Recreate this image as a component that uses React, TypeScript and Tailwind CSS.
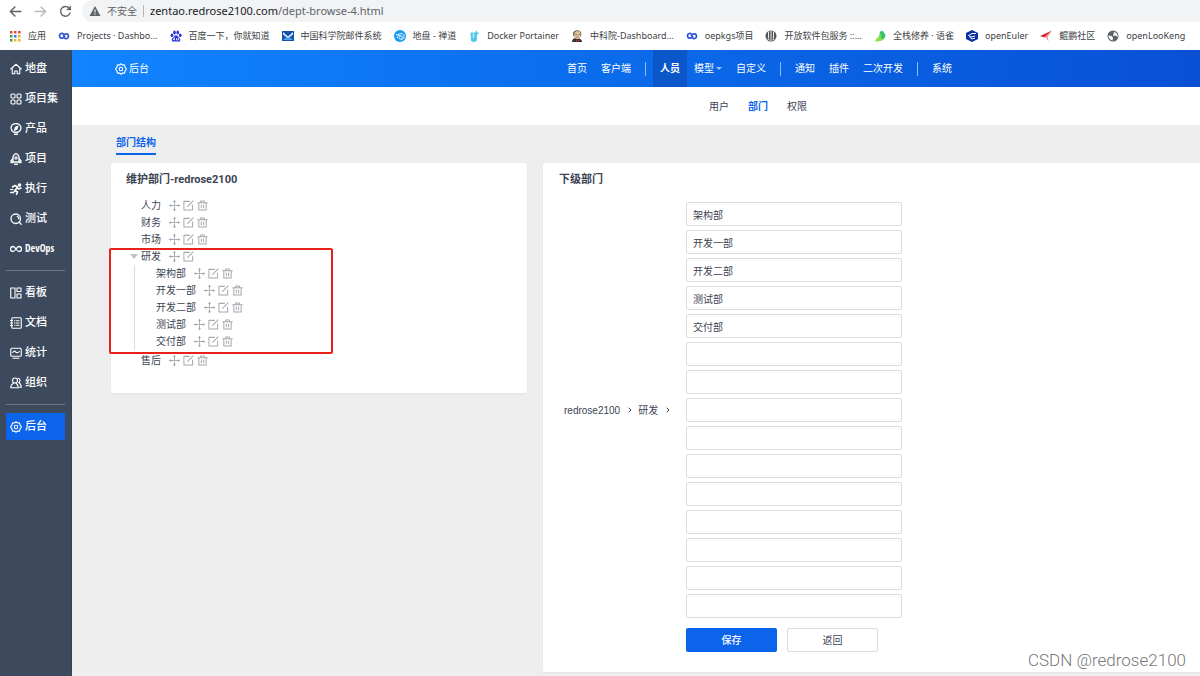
import { useState, type ReactNode } from "react";
import { ChevronRight } from "lucide-react";

interface IconProps {
    children: ReactNode;
    className?: string;
}

interface NavItem {
    label: string;
    icon: ReactNode;
    narrow?: boolean;
}

interface DeptNode {
    name: string;
    children?: DeptNode[];
}

const LineIcon = ({ children, className = "size-3" }: IconProps) => (
    <svg
        viewBox="0 0 24 24"
        fill="none"
        stroke="currentColor"
        strokeWidth="2.2"
        strokeLinecap="round"
        strokeLinejoin="round"
        aria-hidden="true"
        className={`shrink-0 ${className}`}
    >
        {children}
    </svg>
);

const FillIcon = ({ children }: IconProps) => (
    <svg viewBox="0 0 24 24" aria-hidden="true" className="size-3 shrink-0">
        {children}
    </svg>
);

const GearIcon = () => (
    <LineIcon>
        <path d="M12 1.500 15 4l4-.2.9 4L23 12l-3.100 4.200-.9 4-4-.2-3 2.500-3-2.500-4 .2-.9-4L1 12l3.100-4.200.9-4L9 4z" />
        <circle cx="12" cy="12" r="3.500" />
    </LineIcon>
);

const LoopIcon = () => (
    <FillIcon>
        <g fill="none" stroke="#3355d6" strokeWidth="3.600">
            <path d="M11 8.500C9 5.500 3 6.500 3 11.500s5 6 8 3.500l3-3" />
            <path d="M13 15.500c2 3 8 2 8-3s-5-6-8-3.500l-3 3" />
        </g>
    </FillIcon>
);

const bookmarks: NavItem[] = [
    {
        label: "应用",
        icon: (
            <FillIcon>
                <path fill="#e2483d" d="M2 2h5v5H2zM10 2h5v5h-5zM18 2h5v5h-5z" />
                <path fill="#3f9a54" d="M2 10h5v5H2z" />
                <path fill="#3c7be0" d="M10 10h5v5h-5z" />
                <path fill="#f0b429" d="M18 10h5v5h-5zM10 18h5v5h-5zM18 18h5v5h-5z" />
                <path fill="#3f9a54" d="M2 18h5v5H2z" />
            </FillIcon>
        ),
    },
    { label: "Projects · Dashbo...", icon: <LoopIcon /> },
    {
        label: "百度一下，你就知道",
        icon: (
            <FillIcon>
                <g fill="#2a32d8">
                    <ellipse cx="4" cy="10.500" rx="2.700" ry="3.700" />
                    <ellipse cx="9" cy="5" rx="2.700" ry="4" />
                    <ellipse cx="15.500" cy="5" rx="2.700" ry="4" />
                    <ellipse cx="20.500" cy="10.500" rx="2.700" ry="3.700" />
                    <path d="M12 10.500c3 0 4 3 6 5s3 3 2.500 5.500c-1 3.500-5 2-8.500 2s-7.500 1.500-8.500-2c-.5-2.500.5-3.500 2.500-5.500s3-5 6-5z" />
                </g>
                <path d="M9 15v5h-2v-3M13 16v4h4v-4" fill="none" stroke="#fff" strokeWidth="1.500" />
            </FillIcon>
        ),
    },
    {
        label: "中国科学院邮件系统",
        icon: (
            <FillIcon>
                <path fill="#1550ab" d="M0 2h24v20H0z" />
                <path fill="#d5effd" d="M2 4l10 9 10-9v5l-10 8L2 9z" />
                <path fill="#4aa3ee" d="M2 20l6-5 4 3 4-3 6 5z" />
            </FillIcon>
        ),
    },
    {
        label: "地盘 - 禅道",
        icon: (
            <FillIcon>
                <circle cx="12" cy="12" r="12" fill="#149af0" />
                <path
                    d="M4 9c4 2 8-3 13-2M7 16c-2-5 4-7 8-4s1 7-3 6-2-5 1-5M19 8c3 5 0 10-5 12"
                    fill="none"
                    stroke="#fff"
                    strokeWidth="2"
                />
            </FillIcon>
        ),
    },
    {
        label: "Docker Portainer",
        icon: (
            <FillIcon>
                <path fill="#54c8ec" d="M5 5h9l4-5v5h3v4h-3v12c-3 4-9 3-12 1z" />
                <path d="M9 9h4M9 13h4M11 6v10" stroke="#d5f5fd" strokeWidth="1.300" />
            </FillIcon>
        ),
    },
    {
        label: "中科院-Dashboard...",
        icon: (
            <FillIcon>
                <path fill="#3a2d2b" d="M2 24c0-5 3-8 9-8s11 3 11 8z" />
                <path fill="#6e5544" d="M4 8c0-10 17-10 17 1l-2 5H6z" />
                <ellipse cx="13" cy="10" rx="6.500" ry="8" fill="#dfc29e" />
                <path fill="#c43e3e" d="M10 19l3 2 3-2v4l-3-2-3 2z" />
                <path d="M9 9h3M15 9h3M11 14h4" stroke="#5d4637" strokeWidth="1.300" />
            </FillIcon>
        ),
    },
    { label: "oepkgs项目", icon: <LoopIcon /> },
    {
        label: "开放软件包服务 ::...",
        icon: (
            <FillIcon>
                <circle cx="12" cy="12" r="11" fill="#55565a" />
                <path d="M7 3v14M12 2v16M17 3v14" stroke="#fff" strokeWidth="1.800" />
                <path d="M5 18c4 3 10 3 14 0" fill="none" stroke="#fff" strokeWidth="1.500" />
            </FillIcon>
        ),
    },
    {
        label: "全栈修养 · 语雀",
        icon: (
            <FillIcon>
                <path fill="#35c46a" d="M12 3c5-3 9 0 8 3l3 3c0 8-6 13-14 12z" />
                <path fill="#8fe04e" d="M14 8C9 12 5 18 1 23c8 0 15-1 19-5-3 1-7 1-6-10z" />
            </FillIcon>
        ),
    },
    {
        label: "openEuler",
        icon: (
            <FillIcon>
                <path fill="#0b2ea0" d="M12 0l12 6v12l-12 6L0 18V6z" />
                <path d="M20 7l-8 0-7 4 5 3 8-2M7 14l5 4 6-2" fill="none" stroke="#fff" strokeWidth="2" />
            </FillIcon>
        ),
    },
    {
        label: "鲲鹏社区",
        icon: (
            <FillIcon>
                <path fill="#d8262f" d="M24 1L0 12l9 3z" />
                <path fill="#e88b8b" d="M24 1L11 14l6 9-2-9z" />
            </FillIcon>
        ),
    },
    {
        label: "openLooKeng",
        icon: (
            <FillIcon>
                <circle cx="12" cy="12" r="11" fill="#5f6368" />
                <path fill="#fff" d="M3 11l6 1 3 3-1 6c-5-1-8-5-8-10zM12 4l3 2-3 3 1 3 4-1 4 3c1-5-2-10-9-10z" />
            </FillIcon>
        ),
    },
];

const mainMenu: NavItem[] = [
    {
        label: "地盘",
        icon: (
            <LineIcon>
                <path d="M1.500 12L12 2.500 22.500 12M4.500 10.500V21.500H9.500V16h5v5.500h5V10.500" />
            </LineIcon>
        ),
    },
    {
        label: "项目集",
        icon: (
            <LineIcon>
                <rect x="2" y="2" width="8" height="8" rx="2" />
                <rect x="14" y="2" width="8" height="8" rx="2" />
                <rect x="2" y="14" width="8" height="8" rx="2" />
                <rect x="14" y="14" width="8" height="8" rx="2" />
            </LineIcon>
        ),
    },
    {
        label: "产品",
        icon: (
            <LineIcon>
                <path d="M8 18.500C4 16 2 13 2 10a10 9 0 0 1 20 0c0 3-2 6-6 8.500zM9 22.500h6" strokeWidth="2.600" />
                <path d="M16 6l-2 6-5 2.500 2-6z" fill="currentColor" />
            </LineIcon>
        ),
    },
    {
        label: "项目",
        icon: (
            <LineIcon>
                <path
                    d="M6 18V9c0-4 3-6.500 6-8 3 1.500 6 4 6 8v9zM6 11l-4 5v3h4M18 11l4 5v3h-4M9.500 22.500h5"
                    strokeWidth="2.600"
                />
                <circle cx="12" cy="10" r="2.200" />
            </LineIcon>
        ),
    },
    {
        label: "执行",
        icon: (
            <LineIcon>
                <circle cx="19" cy="4" r="2.500" fill="currentColor" />
                <path d="M5 8l5-3 5 3-5 7 5 3-2 5M10 15l-3 4H1M14 9l3 3 5-2" strokeWidth="3" />
                <path d="M1 13h5" />
            </LineIcon>
        ),
    },
    {
        label: "测试",
        icon: (
            <LineIcon>
                <circle cx="11.500" cy="11.500" r="9.500" strokeWidth="2.600" />
                <path d="M18.500 18.500l4 4M14.500 6.500c2 1 3 3 3 5" strokeWidth="2.600" />
            </LineIcon>
        ),
    },
    {
        label: "DevOps",
        narrow: true,
        icon: (
            <LineIcon>
                <path
                    d="M12 12C9 7.500 7.500 7 6 7a5 5 0 0 0 0 10c1.500 0 3-.5 6-5s4.500-5 6-5a5 5 0 0 1 0 10c-1.500 0-3-.5-6-5z"
                    strokeWidth="2.600"
                />
            </LineIcon>
        ),
    },
];

const toolMenu: NavItem[] = [
    {
        label: "看板",
        icon: (
            <LineIcon>
                <path d="M1.500 2H10v20H1.500zM14 2h8v7h-8zM14 14h8v8h-8z" />
            </LineIcon>
        ),
    },
    {
        label: "文档",
        icon: (
            <LineIcon>
                <rect x="3.500" y="1.500" width="19" height="21" rx="2" />
                <path d="M9 7.500h1M13 7.500h5M9 12h1M13 12h5M9 16.500h1M13 16.500h5M1 7h4M1 12h4M1 17h4" />
            </LineIcon>
        ),
    },
    {
        label: "统计",
        icon: (
            <LineIcon>
                <rect x="1.500" y="2.500" width="21" height="16" rx="2" />
                <path d="M5.500 11c3-5 5-2 6.500-.5s4 1.500 6.500-1.500M6 22.500h12" />
            </LineIcon>
        ),
    },
    {
        label: "组织",
        icon: (
            <LineIcon>
                <circle cx="10" cy="7" r="5" />
                <path d="M7 12.500c-4 2-5.500 5-5.500 9h15c0-4-1.500-7-4.500-9M16 2.500c5 1 5 7 1.500 9 3 1.500 5 5 5 9H19" />
            </LineIcon>
        ),
    },
];

const departments: DeptNode[] = [
    { name: "人力" },
    { name: "财务" },
    { name: "市场" },
    {
        name: "研发",
        children: [
            { name: "架构部" },
            { name: "开发一部" },
            { name: "开发二部" },
            { name: "测试部" },
            { name: "交付部" },
        ],
    },
    { name: "售后" },
];

const BrowserBar = () => (
    <div className="bg-white font-['Noto_Sans','Noto_Sans_CJK_SC',sans-serif] text-[#5f6368]">
        <div className="flex h-[22px] items-center pl-[9px]">
            <button type="button" aria-label="后退" className="mr-3">
                <LineIcon className="size-[13px]">
                    <path d="M22 12H3M11 3.500L2.500 12l8.500 8.500" strokeWidth="2.600" />
                </LineIcon>
            </button>
            <button type="button" aria-label="前进" className="mr-3 text-[#b6b8bb]">
                <LineIcon className="size-[13px]">
                    <path d="M2 12h19M13 3.500l8.500 8.500-8.500 8.500" strokeWidth="2.600" />
                </LineIcon>
            </button>
            <button type="button" aria-label="重新加载" className="mr-[10px]">
                <LineIcon className="size-[13px]">
                    <path d="M20.500 14.500A9 9 0 1 1 18.500 5.500L21 8" strokeWidth="2.600" />
                    <path d="M21.500 2v7h-7z" fill="currentColor" strokeWidth="1" />
                </LineIcon>
            </button>
            <div className="flex h-full flex-1 items-center rounded-l-full bg-[#f1f3f4] pl-[7px] text-[11px]">
                <svg viewBox="0 0 24 24" aria-hidden="true" className="mr-[6px] size-3">
                    <path d="M12 2l11 20H1z" fill="#5f6368" />
                    <path d="M12 9v6M12 17v2.500" stroke="#fff" strokeWidth="2.200" />
                </svg>
                <span className="text-[10px]">不安全</span>
                <span className="mx-[6px] h-3 w-px bg-[#b4b7bb]" />
                <span>
                    <span className="text-[#202124]">zentao.redrose2100.com</span>
                    /dept-browse-4.html
                </span>
            </div>
        </div>
        <div className="flex h-7 items-center gap-3 overflow-hidden pl-[9px]">
            {bookmarks.map((item) => (
                <a
                    key={item.label}
                    href="#"
                    className="flex shrink-0 items-center gap-[7px] whitespace-nowrap text-[9px] text-[#3c4043]"
                >
                    {item.icon}
                    {item.label}
                </a>
            ))}
        </div>
    </div>
);

const SideMenu = ({ items }: { items: NavItem[] }) => (
    <ul className="flex flex-col gap-[3px]">
        {items.map((item) => (
            <li key={item.label}>
                <a href="#" className="flex h-[27px] items-center gap-[3px] pl-1 text-[11px] font-medium">
                    {item.icon}
                    <span
                        className={
                            item.narrow
                                ? "font-['Open_Sans_Condensed','Roboto_Condensed','Liberation_Sans_Narrow',Roboto,sans-serif] text-[10px]"
                                : ""
                        }
                    >
                        {item.label}
                    </span>
                </a>
            </li>
        ))}
    </ul>
);

const Sidebar = () => (
    <aside className="w-[72px] shrink-0 border-r border-[#34425a] bg-[#3d4a5d] px-[6px] pt-[5px] text-white">
        <SideMenu items={mainMenu} />
        <hr className="my-2 border-[#68768b]" />
        <SideMenu items={toolMenu} />
        <hr className="my-2 border-[#68768b]" />
        <a href="#" className="flex h-[27px] items-center gap-[3px] bg-[#0c64eb] pl-1 text-[11px] font-medium">
            <GearIcon />
            后台
        </a>
    </aside>
);

const TopLink = ({ label, active, caret }: { label: string; active?: boolean; caret?: boolean }) => (
    <a
        href="#"
        className={`flex h-full items-center px-[7px] ${active ? "bg-[#0b57c9] font-bold" : ""}`}
    >
        {label}
        {caret && (
            <svg viewBox="0 0 6 3" aria-hidden="true" className="ml-[2px] w-[6px] opacity-60">
                <path d="M0 0h6L3 3z" fill="currentColor" />
            </svg>
        )}
    </a>
);

const TopDivider = () => <span className="mx-[7px] h-[14px] w-px bg-[#8dbbfa]" />;

const TopBar = () => (
    <header className="flex h-[37px] items-center bg-linear-to-r from-[#1284ff] to-[#0a50d5] pl-[43px] text-[10px] text-white">
        <a href="#" className="flex w-[445px] items-center gap-[2px]">
            <GearIcon />
            后台
        </a>
        <nav className="flex h-full items-center whitespace-nowrap">
            <TopLink label="首页" />
            <TopLink label="客户端" />
            <TopDivider />
            <TopLink label="人员" active />
            <TopLink label="模型" caret />
            <TopLink label="自定义" />
            <TopDivider />
            <TopLink label="通知" />
            <TopLink label="插件" />
            <TopLink label="二次开发" />
            <TopDivider />
            <TopLink label="系统" />
        </nav>
    </header>
);

const NodeActions = ({ name, removable }: { name: string; removable: boolean }) => (
    <span className="ml-2 flex gap-[3px] text-[#a5a8ad]">
        <button type="button" aria-label={`移动${name}`}>
            <LineIcon className="size-[11px]">
                <path d="M12 1v8M12 15v8M1 12h8M15 12h8M11 12h2M10.500 3h3M10.500 21h3M3 10.500v3M21 10.500v3" />
            </LineIcon>
        </button>
        <button type="button" aria-label={`编辑${name}`}>
            <LineIcon className="size-[11px]">
                <path d="M14 3H2v19h19V11M10 14L22 2" />
            </LineIcon>
        </button>
        {removable && (
            <button type="button" aria-label={`删除${name}`}>
                <LineIcon className="size-[11px]">
                    <path d="M1.500 6h21M8 6V2h8v4M4 6v16h16V6M9.500 11v6M14.500 11v6" />
                </LineIcon>
            </button>
        )}
    </span>
);

const DeptTree = ({ nodes }: { nodes: DeptNode[] }) => (
    <ul>
        {nodes.map((node) => (
            <li key={node.name}>
                <div className="relative flex h-[17px] items-center">
                    {node.children && (
                        <svg viewBox="0 0 8 5" aria-hidden="true" className="absolute -left-[11px] w-2">
                            <path d="M0 0h8L4 5z" fill="#bfc2c6" />
                        </svg>
                    )}
                    <a href="#">{node.name}</a>
                    <NodeActions name={node.name} removable={!node.children} />
                </div>
                {node.children && (
                    <div className="-ml-[7px] mb-[2px] border-l border-[#dcdcdc] pl-[21px]">
                        <DeptTree nodes={node.children} />
                    </div>
                )}
            </li>
        ))}
    </ul>
);

const PanelTitle = ({ children }: { children: ReactNode }) => (
    <h2 className="mb-[14px] font-['Roboto','Noto_Sans_CJK_SC',sans-serif] text-[11px] leading-4 font-bold text-[#3c4353]">
        {children}
    </h2>
);

const DeptPanel = () => (
    <section className="relative w-[416px] shrink-0 rounded-xs bg-white px-[15px] pt-[9px] pb-6 shadow-xs">
        <PanelTitle>维护部门-redrose2100</PanelTitle>
        <div className="-mt-[5px] pl-[15px]">
            <DeptTree nodes={departments} />
        </div>
        <div className="pointer-events-none absolute top-[85px] -left-[2px] h-[106px] w-56 rounded-xs border-2 border-[#e8211a]" />
    </section>
);

const ChildPanel = () => {
    const [names, setNames] = useState<string[]>([
        "架构部",
        "开发一部",
        "开发二部",
        "测试部",
        "交付部",
        ...Array(10).fill(""),
    ]);

    const handleChange = (index: number, value: string) => {
        setNames(names.map((name, i) => (i === index ? value : name)));
    };

    return (
        <section className="flex-1 rounded-l-xs bg-white px-4 pt-[9px] pb-5 shadow-xs">
            <PanelTitle>下级部门</PanelTitle>
            <form onSubmit={(e) => e.preventDefault()}>
                <div className="flex items-center">
                    <div className="flex w-[127px] shrink-0 items-center gap-[6px] pl-[5px]">
                        redrose2100
                        <span className="flex items-center gap-1">
                            <ChevronRight className="size-2" strokeWidth={3} />
                            研发
                        </span>
                        <ChevronRight className="size-2" strokeWidth={3} />
                    </div>
                    <div className="flex w-[216px] flex-col gap-1">
                        {names.map((name, i) => (
                            <input
                                key={i}
                                type="text"
                                aria-label={`下级部门 ${i + 1}`}
                                value={name}
                                onChange={(e) => handleChange(i, e.target.value)}
                                className="h-6 rounded-xs border border-[#dcdcdc] px-[6px] outline-none focus:border-[#0c64eb]"
                            />
                        ))}
                    </div>
                </div>
                <div className="mt-[10px] flex gap-[10px] pl-[127px]">
                    <button type="submit" className="h-6 w-[91px] rounded-xs bg-[#0c64eb] font-medium text-white">
                        保存
                    </button>
                    <button type="button" className="h-6 w-[91px] rounded-xs border border-[#dcdcdc]">
                        返回
                    </button>
                </div>
            </form>
        </section>
    );
};

export default function App() {
    return (
        <div className="relative flex min-h-screen flex-col overflow-hidden bg-[#eeeeee] font-['Liberation_Sans','Noto_Sans_CJK_SC',sans-serif] text-[10px] text-[#3c4353]">
            <BrowserBar />
            <div className="flex flex-1">
                <Sidebar />
                <main className="min-w-0 flex-1">
                    <TopBar />
                    <nav className="flex h-[38px] items-center gap-[19px] bg-white pl-[637px]">
                        <a href="#">用户</a>
                        <a href="#" className="font-bold text-[#0c64eb]">
                            部门
                        </a>
                        <a href="#">权限</a>
                    </nav>
                    <div className="pt-[10px] pb-[3px] pl-[39px]">
                        <div className="mb-2 flex pl-[5px]">
                            <a
                                href="#"
                                className="border-b-2 border-[#0c64eb] pb-[2px] leading-4 font-bold text-[#0c64eb]"
                            >
                                部门结构
                            </a>
                        </div>
                        <div className="flex items-start gap-4">
                            <DeptPanel />
                            <ChildPanel />
                        </div>
                    </div>
                </main>
            </div>
            <div className="absolute right-[14px] bottom-1 font-['Roboto',sans-serif] text-[17px] leading-6 font-light text-[#777777]">
                CSDN @redrose2100
            </div>
        </div>
    );
}
